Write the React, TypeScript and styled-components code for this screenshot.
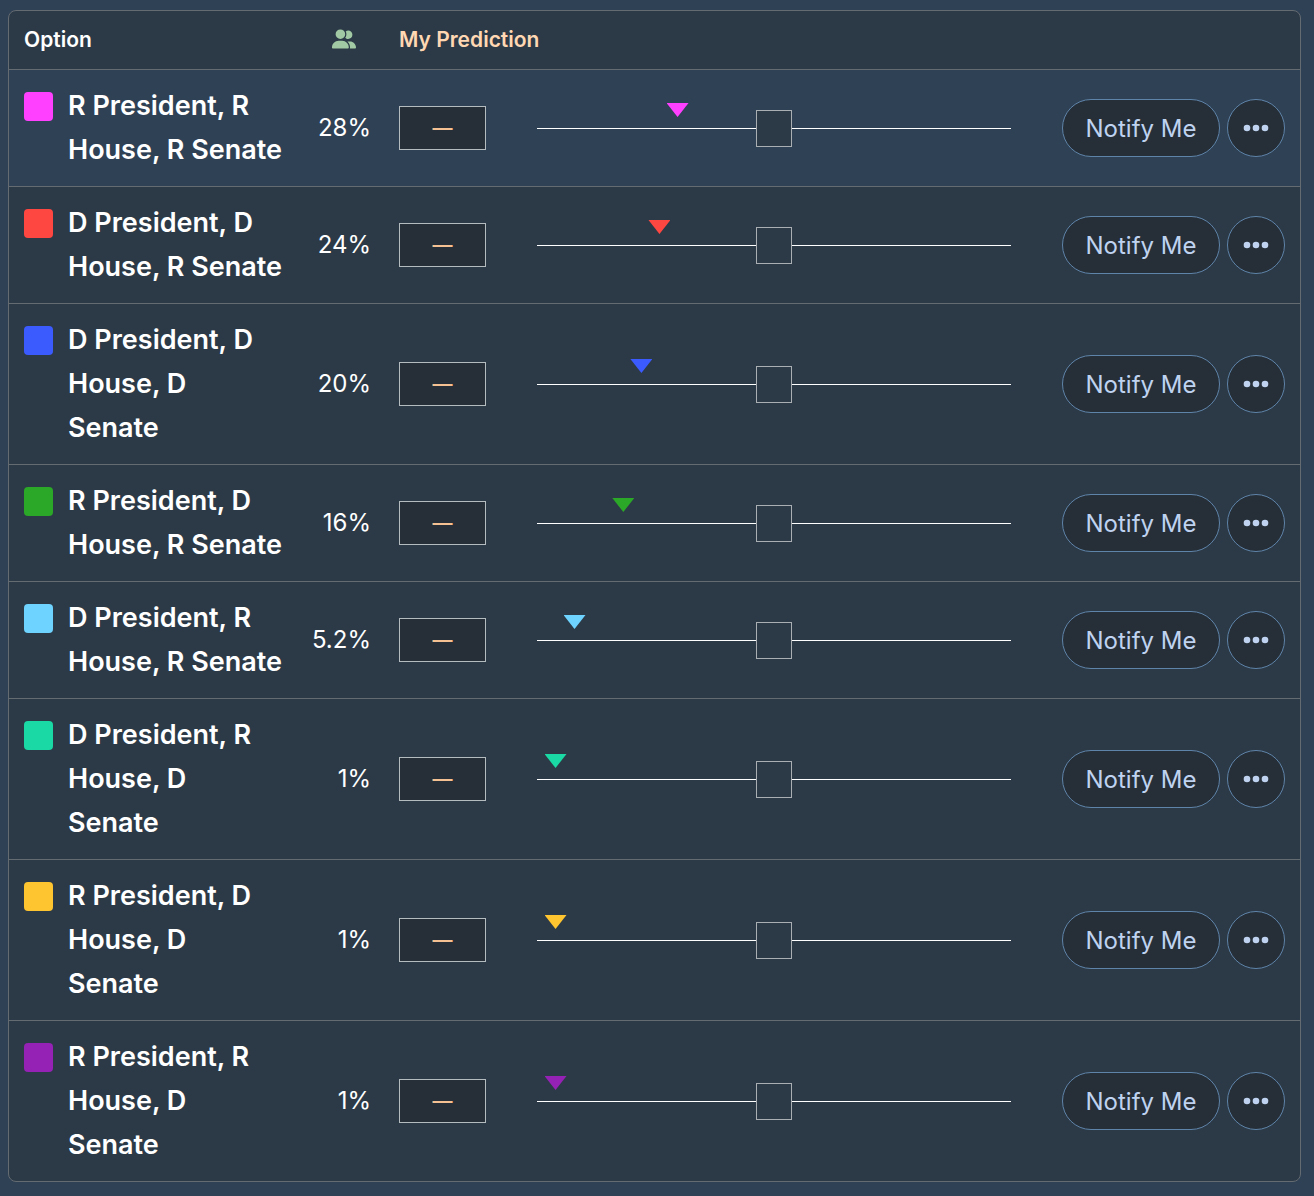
import React, { useState } from "react";
import styled, { createGlobalStyle } from "styled-components";
import { FaUserGroup } from "react-icons/fa6";

const GlobalStyle = createGlobalStyle`
  * { box-sizing: border-box; }
  body {
    margin: 0;
    background: #2f4155;
    color: #ffffff;
    font-family: Inter, "Liberation Sans", sans-serif;
  }
`;

const Page = styled.main`
  padding: 10px 13px 13px 8px;
`;

const Panel = styled.div`
  border: 1px solid #646b71;
  border-radius: 8px;
  background: #2c3a47;
  overflow: hidden;
`;

const Table = styled.table`
  width: 100%;
  table-layout: fixed;
  border-collapse: separate;
  border-spacing: 0;
`;

const Col = styled.col<{ $width?: number }>`
  width: ${(p) => (p.$width ? `${p.$width}px` : "auto")};
`;

const HeadCell = styled.th<{ $accent?: boolean; $center?: boolean }>`
  height: 58px;
  padding: 0 0 ${(p) => (p.$center ? 2 : 0)}px ${(p) => (p.$center ? 0 : p.$accent ? 14 : 15)}px;
  font-size: 21px;
  font-weight: 600;
  line-height: 28px;
  text-align: ${(p) => (p.$center ? "center" : "left")};
  color: ${(p) => (p.$accent ? "#ffd8b3" : "#ffffff")};
`;

const CommunityIcon = styled(FaUserGroup)`
  display: block;
  width: 24px;
  height: 20px;
  margin: 0 auto;
  color: #a1c9a3;
`;

const Row = styled.tr<{ $active: boolean }>`
  background: ${(p) => (p.$active ? "#2f4155" : "transparent")};
`;

const Cell = styled.td`
  border-top: 1px solid #646b71;
  padding: 0;
  vertical-align: middle;
`;

const OptionCell = styled.th`
  border-top: 1px solid #646b71;
  padding: 14px 0 14px 15px;
  text-align: left;
  font-weight: 600;
`;

const Option = styled.div`
  display: flex;
  gap: 15px;
`;

const Swatch = styled.span<{ $color: string }>`
  flex: none;
  width: 29px;
  height: 29px;
  margin-top: 8px;
  border-radius: 4px;
  background: ${(p) => p.$color};
`;

const Name = styled.span`
  font-size: 27px;
  line-height: 44px;
  white-space: pre;
`;

const Percent = styled(Cell)`
  padding-right: 14px;
  text-align: right;
  font-size: 24px;
  line-height: 36px;
`;

const InputCell = styled(Cell)`
  padding-left: 14px;
`;

const Prediction = styled.input`
  display: block;
  width: 87px;
  height: 44px;
  padding: 0;
  border: 1px solid #b4bcc0;
  border-radius: 0;
  background: #262f38;
  color: #f5c193;
  font: 600 20px Inter, sans-serif;
  text-align: center;
`;

const SliderCell = styled(Cell)`
  padding: 0 51px;
`;

const SliderBox = styled.div`
  position: relative;
  height: 38px;
`;

const Slider = styled.input`
  display: block;
  appearance: none;
  width: 100%;
  height: 38px;
  margin: 0;
  background: transparent;

  &::-webkit-slider-runnable-track {
    height: 37px;
    background: linear-gradient(#ffffff, #ffffff) center / 100% 1px no-repeat;
  }
  &::-webkit-slider-thumb {
    appearance: none;
    width: 36px;
    height: 37px;
    border: 1px solid #a9afb3;
    border-radius: 0;
    background: #2c3a47;
  }
`;

const MarkerArea = styled.div`
  position: absolute;
  top: -6px;
  left: 14px;
  right: 8px;
  pointer-events: none;
`;

const Marker = styled.span<{ $color: string }>`
  position: absolute;
  width: 22px;
  height: 14px;
  transform: translateX(-50%);
  background: ${(p) => p.$color};
  clip-path: polygon(0 0, 100% 0, 50% 100%);
`;

const Actions = styled.div`
  display: flex;
  gap: 7px;
`;

const Pill = styled.button<{ $round?: boolean }>`
  display: flex;
  align-items: center;
  justify-content: center;
  width: ${(p) => (p.$round ? 58 : 158)}px;
  height: 58px;
  padding: 0;
  border: 1px solid #5f84a9;
  border-radius: 29px;
  background: #262f38;
  color: #bfd3f0;
  font: 400 24px Inter, sans-serif;
  white-space: nowrap;
  cursor: pointer;
`;

const Dots = () => (
  <svg width="26" height="8" viewBox="0 0 26 8" fill="currentColor" aria-hidden="true">
    <circle cx="4" cy="4" r="3.3" />
    <circle cx="13" cy="4" r="3.3" />
    <circle cx="22" cy="4" r="3.3" />
  </svg>
);

interface Outcome {
  name: string;
  share: number;
  color: string;
}

const outcomes: Outcome[] = [
  { name: "R President, R\nHouse, R Senate", share: 28, color: "#ff40ff" },
  { name: "D President, D\nHouse, R Senate", share: 24, color: "#ff4742" },
  { name: "D President, D\nHouse, D\nSenate", share: 20, color: "#3b5bff" },
  { name: "R President, D\nHouse, R Senate", share: 16, color: "#2ca828" },
  { name: "D President, R\nHouse, R Senate", share: 5.2, color: "#6fd3ff" },
  { name: "D President, R\nHouse, D\nSenate", share: 1, color: "#1bd9a4" },
  { name: "R President, D\nHouse, D\nSenate", share: 1, color: "#ffc530" },
  { name: "R President, R\nHouse, D\nSenate", share: 1, color: "#9522b4" },
];

function OutcomeRow({ outcome, active }: { outcome: Outcome; active: boolean }) {
  const [value, setValue] = useState<number | null>(null);
  const [text, setText] = useState("—");
  const { name, share, color } = outcome;
  return (
    <Row $active={active}>
      <OptionCell scope="row">
        <Option>
          <Swatch $color={color} />
          <Name>{name}</Name>
        </Option>
      </OptionCell>
      <Percent>{share}%</Percent>
      <InputCell>
        <Prediction
          type="text"
          aria-label={`My prediction for ${name}`}
          value={text}
          onChange={(e) => setText(e.target.value)}
        />
      </InputCell>
      <SliderCell>
        <SliderBox>
          <Slider
            type="range"
            min={0}
            max={100}
            aria-label={`Probability of ${name}`}
            value={value ?? 50}
            onChange={(e) => {
              setValue(Number(e.target.value));
              setText(`${e.target.value}%`);
            }}
          />
          <MarkerArea>
            <Marker $color={color} style={{ left: `${share}%` }} />
          </MarkerArea>
        </SliderBox>
      </SliderCell>
      <Cell>
        <Actions>
          <Pill type="button">Notify Me</Pill>
          <Pill type="button" $round aria-label="More actions">
            <Dots />
          </Pill>
        </Actions>
      </Cell>
    </Row>
  );
}

export default function App() {
  return (
    <>
      <GlobalStyle />
      <Page>
        <Panel>
          <Table>
            <colgroup>
              <Col $width={294} />
              <Col $width={82} />
              <Col $width={101} />
              <Col />
              <Col $width={238} />
            </colgroup>
            <thead>
              <tr>
                <HeadCell scope="col">Option</HeadCell>
                <HeadCell scope="col" $center aria-label="Community">
                  <CommunityIcon />
                </HeadCell>
                <HeadCell scope="col" $accent colSpan={3}>
                  My Prediction
                </HeadCell>
              </tr>
            </thead>
            <tbody>
              {outcomes.map((outcome, i) => (
                <OutcomeRow key={outcome.name} outcome={outcome} active={i === 0} />
              ))}
            </tbody>
          </Table>
        </Panel>
      </Page>
    </>
  );
}
